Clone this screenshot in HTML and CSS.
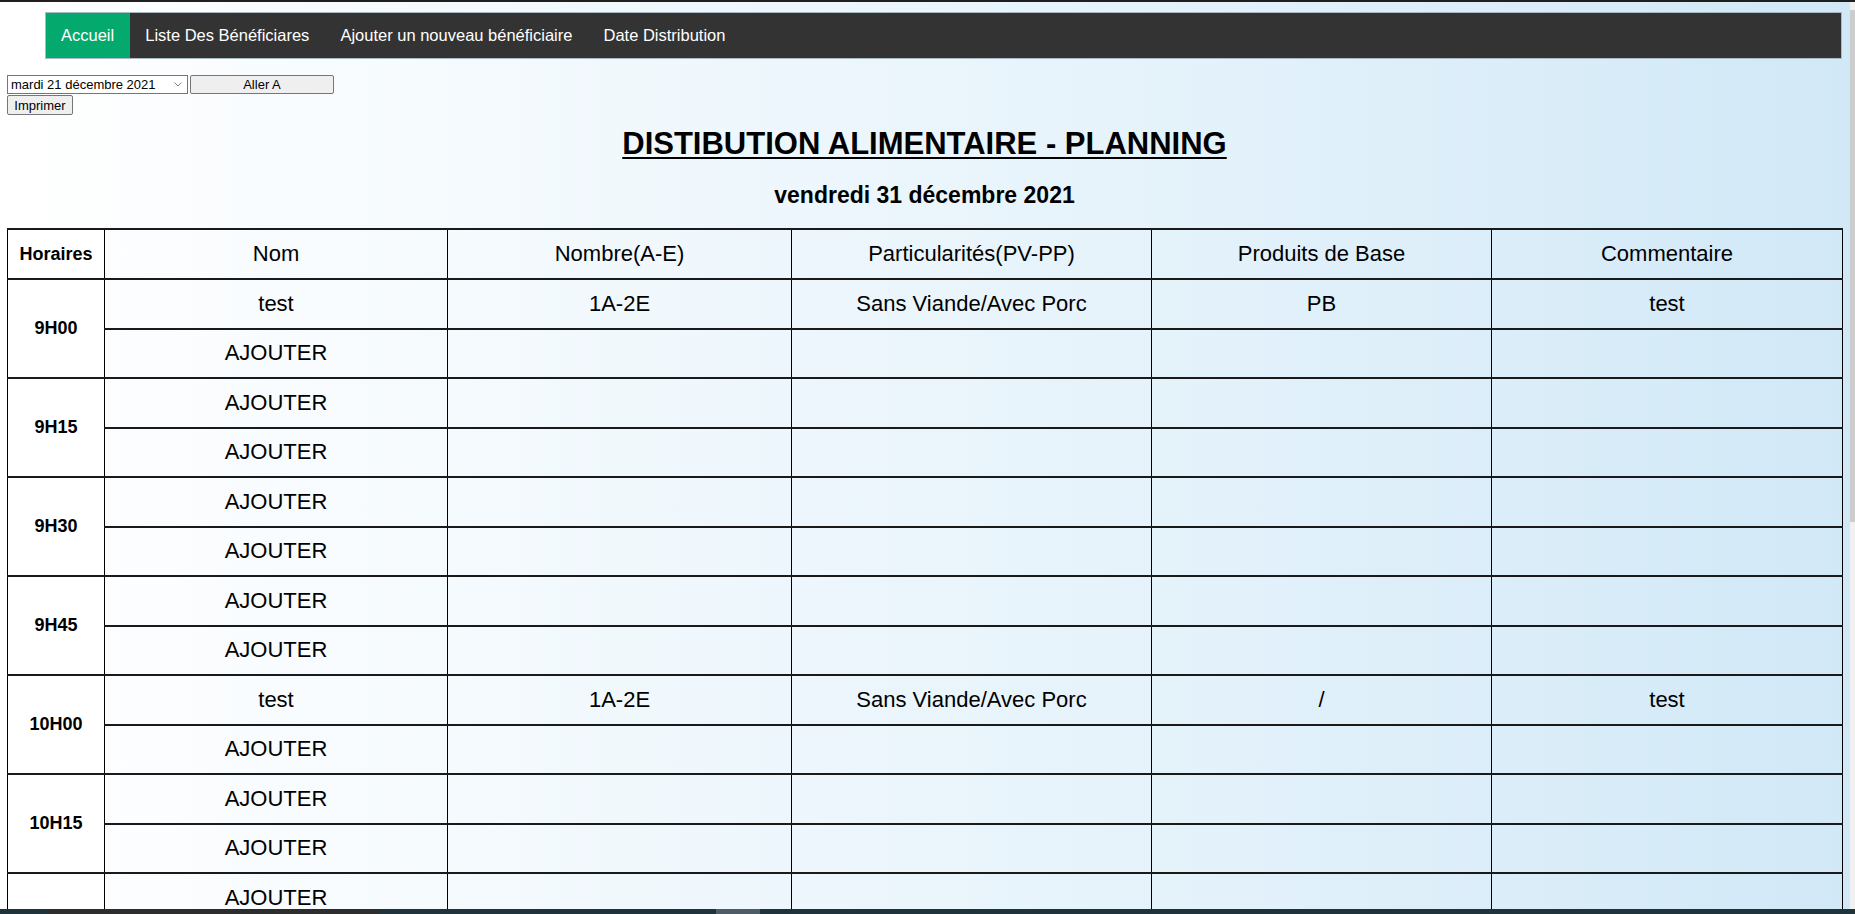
FILE: index.html
```html
<!DOCTYPE html>
<html lang="fr">
<head>
<meta charset="utf-8">
<title>Distribution alimentaire - Planning</title>
<link rel="stylesheet" href="styles.css">
</head>
<body>
<div class="page">
  <ul class="nav">
    <li><a class="active" href="#">Accueil</a></li>
    <li><a href="#">Liste Des Bénéficiares</a></li>
    <li><a href="#">Ajouter un nouveau bénéficiaire</a></li>
    <li><a href="#">Date Distribution</a></li>
  </ul>

  <form class="controls">
    <div class="row"><select class="date-select"><option>mardi 21 décembre 2021</option></select><button type="button" class="go">Aller A</button></div>
    <div class="row"><button type="button" class="print">Imprimer</button></div>
  </form>

  <h1 class="title">DISTIBUTION ALIMENTAIRE - PLANNING</h1>
  <h2 class="subtitle">vendredi 31 décembre 2021</h2>

  <table class="planning">
    <colgroup>
      <col class="c-time"><col class="c-nom"><col class="c-nb"><col class="c-part"><col class="c-pb"><col class="c-com">
    </colgroup>
    <thead>
      <tr class="head">
        <th class="time">Horaires</th><th>Nom</th><th>Nombre(A-E)</th><th>Particularités(PV-PP)</th><th>Produits de Base</th><th>Commentaire</th>
      </tr>
    </thead>
    <tbody>
      <tr><td class="time" rowspan="2">9H00</td><td>test</td><td>1A-2E</td><td>Sans Viande/Avec Porc</td><td>PB</td><td>test</td></tr>
      <tr><td>AJOUTER</td><td></td><td></td><td></td><td></td></tr>
      <tr><td class="time" rowspan="2">9H15</td><td>AJOUTER</td><td></td><td></td><td></td><td></td></tr>
      <tr><td>AJOUTER</td><td></td><td></td><td></td><td></td></tr>
      <tr><td class="time" rowspan="2">9H30</td><td>AJOUTER</td><td></td><td></td><td></td><td></td></tr>
      <tr><td>AJOUTER</td><td></td><td></td><td></td><td></td></tr>
      <tr><td class="time" rowspan="2">9H45</td><td>AJOUTER</td><td></td><td></td><td></td><td></td></tr>
      <tr><td>AJOUTER</td><td></td><td></td><td></td><td></td></tr>
      <tr><td class="time" rowspan="2">10H00</td><td>test</td><td>1A-2E</td><td>Sans Viande/Avec Porc</td><td>/</td><td>test</td></tr>
      <tr><td>AJOUTER</td><td></td><td></td><td></td><td></td></tr>
      <tr><td class="time" rowspan="2">10H15</td><td>AJOUTER</td><td></td><td></td><td></td><td></td></tr>
      <tr><td>AJOUTER</td><td></td><td></td><td></td><td></td></tr>
      <tr><td class="time" rowspan="2">10H30</td><td>AJOUTER</td><td></td><td></td><td></td><td></td></tr>
      <tr><td>AJOUTER</td><td></td><td></td><td></td><td></td></tr>
    </tbody>
  </table>
</div>

<div class="chrome-top"></div>
<div class="scrollbar"><div class="thumb"></div></div>
<div class="taskbar"><span class="seg a"></span><span class="seg b"></span><span class="seg c"></span><span class="seg d"></span></div>
</body>
</html>
```

FILE: styles.css
```css
html {
  overflow: hidden;
  min-height: 100%;
  background: linear-gradient(to right, #ffffff 0%, #e6f3fb 60%, #d1e8f7 100%);
}
body {
  margin: 0;
  font-family: "Liberation Sans", Arial, sans-serif;
  color: #000;
}
.page {
  width: 1835px;
  padding: 12px 0 40px 7px;
}

/* nav */
.nav {
  list-style: none;
  margin: 0 0 0 38px;
  padding: 0;
  display: flex;
  background: #333;
  border: 1px solid #a9bac5;
}
.nav a {
  display: block;
  padding: 13px 16px 13px 15px;
  font-size: 16.5px;
  line-height: 19px;
  color: #fff;
  text-decoration: none;
}
.nav a.active { background: #04aa6d; }

/* controls */
.controls { margin-top: 16px; }
.controls .row { display: flex; }
.date-select {
  -webkit-appearance: none;
  appearance: none;
  width: 181px;
  height: 19px;
  margin: 0;
  padding: 0 0 0 3px;
  font: 13px "Liberation Sans", Arial, sans-serif;
  color: #000;
  background: #fff url("data:image/svg+xml;utf8,<svg xmlns='http://www.w3.org/2000/svg' width='8' height='5' viewBox='0 0 8 5'><path d='M0.5 0.5 L4 4 L7.5 0.5' fill='none' stroke='%23888' stroke-width='1'/></svg>") no-repeat right 5px center;
  border: 1px solid #767676;
  border-radius: 0;
}
.go, .print {
  margin: 0;
  font: 13px "Liberation Sans", Arial, sans-serif;
  color: #000;
  background: #efefef;
  border: 1px solid #767676;
  border-radius: 2px;
  padding: 0 6px;
}
.go { width: 144px; height: 19px; margin-left: 2px; }
.print { height: 20px; margin-top: 1px; width: 66px; }

/* titles */
.title {
  margin: 11px 0 0;
  text-align: center;
  font-size: 31px;
  font-weight: bold;
  text-decoration: underline;
  text-decoration-thickness: 2px;
  text-underline-offset: 3px;
}
.subtitle {
  margin: 20px 0 0;
  text-align: center;
  font-size: 23px;
  font-weight: bold;
}

/* table */
.planning {
  margin-top: 19px;
  width: 1835px;
  table-layout: fixed;
  border-collapse: collapse;
  border: 1px solid #000;
}
.c-time { width: 97px; }
.c-nom { width: 343px; }
.c-nb { width: 344px; }
.c-part { width: 360px; }
.c-pb { width: 340px; }
.c-com { width: 351px; }

.planning th, .planning td {
  border-left: 1px solid #000;
  border-right: 1px solid #000;
  border-top: 2px solid #1a1a1a;
  border-bottom: 2px solid #1a1a1a;
  padding: 0;
  text-align: center;
  vertical-align: middle;
  font-size: 22px;
  font-weight: normal;
}
.planning tr.head { height: 50px; }
.planning tbody tr { height: 49.5px; }
.planning .time {
  background: #fff;
  font-size: 18px;
  font-weight: bold;
}

/* screenshot chrome */
.chrome-top {
  position: fixed;
  left: 0; top: 0; right: 0;
  height: 2px;
  background: #1f1f1f;
}
.scrollbar {
  position: fixed;
  top: 2px; bottom: 5px; right: 0;
  width: 5px;
  background: #f1f1f1;
}
.scrollbar .thumb {
  margin-top: 8px;
  height: 512px;
  background: #cdcdcd;
}
.taskbar {
  position: fixed;
  left: 0; right: 0; bottom: 0;
  height: 5px;
  background: #1f333d;
  display: flex;
}
.taskbar .seg { display: block; height: 5px; }
.taskbar .a { width: 47px; }
.taskbar .b { width: 332px; background: #2d2d2d; }
.taskbar .c { width: 337px; }
.taskbar .d { width: 44px; background: #4d5c66; }
```
